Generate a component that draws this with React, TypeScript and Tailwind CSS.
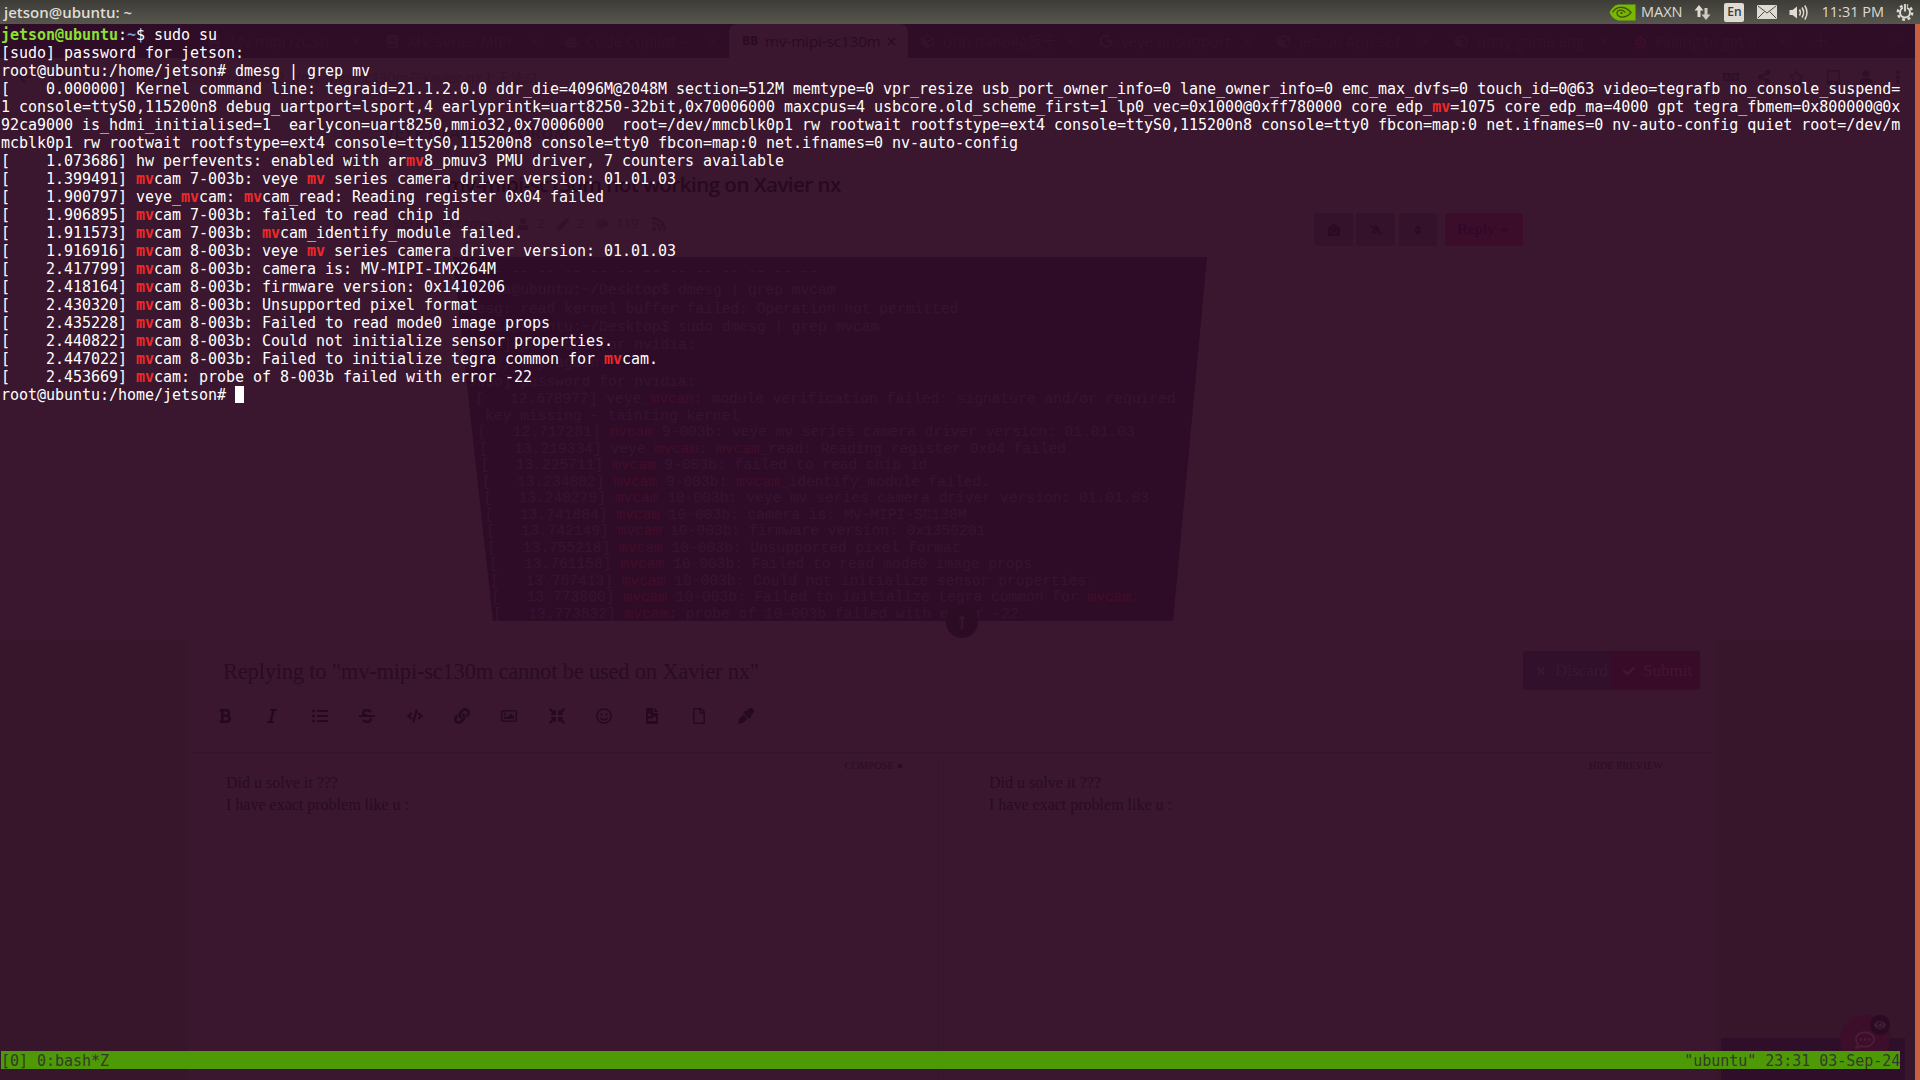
import { Fragment, type ReactNode } from "react";
import {
  FaBold,
  FaItalic,
  FaListUl,
  FaStrikethrough,
  FaCode,
  FaLink,
  FaRegImage,
  FaCompressArrowsAlt,
  FaRegSmile,
  FaFileImage,
  FaRegFile,
  FaEyeDropper,
  FaTimes,
  FaCheck,
  FaEnvelopeOpen,
  FaBellSlash,
  FaSort,
  FaCaretDown,
  FaEye,
  FaRegCommentDots,
  FaLongArrowAltUp,
  FaUser,
  FaPen,
  FaRss,
  FaRegStar,
  FaEllipsisV,
  FaShareAlt,
  FaArrowLeft,
  FaArrowRight,
  FaRedo,
  FaLanguage,
  FaTabletAlt,
  FaGoogle,
  FaRobot,
  FaBook,
  FaCube,
  FaRaspberryPi,
} from "react-icons/fa";
import { Plus, ChevronDown, X } from "lucide-react";

const LOG_LINES = [
  "[    1.073686] hw perfevents: enabled with ar|mv|8_pmuv3 PMU driver, 7 counters available",
  "[    1.399491] |mv|cam 7-003b: veye |mv| series camera driver version: 01.01.03",
  "[    1.900797] veye_|mv|cam: |mv|cam_read: Reading register 0x04 failed",
  "[    1.906895] |mv|cam 7-003b: failed to read chip id",
  "[    1.911573] |mv|cam 7-003b: |mv|cam_identify_module failed.",
  "[    1.916916] |mv|cam 8-003b: veye |mv| series camera driver version: 01.01.03",
  "[    2.417799] |mv|cam 8-003b: camera is: MV-MIPI-IMX264M",
  "[    2.418164] |mv|cam 8-003b: firmware version: 0x1410206",
  "[    2.430320] |mv|cam 8-003b: Unsupported pixel format",
  "[    2.435228] |mv|cam 8-003b: Failed to read mode0 image props",
  "[    2.440822] |mv|cam 8-003b: Could not initialize sensor properties.",
  "[    2.447022] |mv|cam 8-003b: Failed to initialize tegra common for |mv|cam.",
  "[    2.453669] |mv|cam: probe of 8-003b failed with error -22",
];

const KERNEL_LINES = [
  "[    0.000000] Kernel command line: tegraid=21.1.2.0.0 ddr_die=4096M@2048M section=512M memtype=0 vpr_resize usb_port_owner_info=0 lane_owner_info=0 emc_max_dvfs=0 touch_id=0@63 video=tegrafb no_console_suspend=",
  "1 console=ttyS0,115200n8 debug_uartport=lsport,4 earlyprintk=uart8250-32bit,0x70006000 maxcpus=4 usbcore.old_scheme_first=1 lp0_vec=0x1000@0xff780000 core_edp_|mv|=1075 core_edp_ma=4000 gpt tegra_fbmem=0x800000@0x",
  "92ca9000 is_hdmi_initialised=1  earlycon=uart8250,mmio32,0x70006000  root=/dev/mmcblk0p1 rw rootwait rootfstype=ext4 console=ttyS0,115200n8 console=tty0 fbcon=map:0 net.ifnames=0 nv-auto-config quiet root=/dev/m",
  "mcblk0p1 rw rootwait rootfstype=ext4 console=ttyS0,115200n8 console=tty0 fbcon=map:0 net.ifnames=0 nv-auto-config",
];

const GHOST_TOP = [
  "-- -- -- -- -- -- -- -- -- -- -- -- -- --",
  "nvidia@ubuntu:~/Desktop$ dmesg | grep mvcam",
  "dmesg: read kernel buffer failed: Operation not permitted",
  "nvidia@ubuntu:~/Desktop$ sudo dmesg | grep mvcam",
  "[sudo] password for nvidia:",
  "Sorry, try again.",
  "[sudo] password for nvidia:",
];

const GHOST_LOG = [
  "[   12.678977] veye_|mvcam|: module verification failed: signature and/or required",
  " key missing - tainting kernel",
  "[   12.717281] |mvcam| 9-003b: veye mv series camera driver version: 01.01.03",
  "[   13.219334] veye_|mvcam|: |mvcam|_read: Reading register 0x04 failed",
  "[   13.225711] |mvcam| 9-003b: failed to read chip id",
  "[   13.234802] |mvcam| 9-003b: |mvcam|_identify_module failed.",
  "[   13.240279] |mvcam| 10-003b: veye mv series camera driver version: 01.01.03",
  "[   13.741884] |mvcam| 10-003b: camera is: MV-MIPI-SC130M",
  "[   13.742149] |mvcam| 10-003b: firmware version: 0x1350201",
  "[   13.755218] |mvcam| 10-003b: Unsupported pixel format",
  "[   13.761158] |mvcam| 10-003b: Failed to read mode0 image props",
  "[   13.767413] |mvcam| 10-003b: Could not initialize sensor properties.",
  "[   13.773800] |mvcam| 10-003b: Failed to initialize tegra common for |mvcam|.",
  "[   13.773832] |mvcam|: probe of 10-003b failed with error -22",
];

const TABS_BEFORE: { title: string; icon?: ReactNode }[] = [
  { title: "Mv mipi i2c.sh", icon: <FaBook className="size-[13px]" /> },
  { title: "MV Series MIPI", icon: <FaBook className="size-[13px]" /> },
  { title: "Code Copilot -", icon: <FaRobot className="size-[15px]" /> },
];

const TABS_AFTER: { title: string; icon?: ReactNode }[] = [
  { title: "orin nano4g板卡", icon: <FaCube className="size-[13px]" /> },
  { title: "veye unsupport", icon: <FaGoogle className="size-[14px]" /> },
  { title: "Jetson App Sof", icon: <FaCube className="size-[13px]" /> },
  { title: "unity game eng", icon: <FaCube className="size-[13px]" /> },
  { title: "Failing to get a", icon: <FaRaspberryPi className="size-[15px] text-[#43102f]" /> },
];

const TOOLBAR = [
  FaBold,
  FaItalic,
  FaListUl,
  FaStrikethrough,
  FaCode,
  FaLink,
  FaRegImage,
  FaCompressArrowsAlt,
  FaRegSmile,
  FaFileImage,
  FaRegFile,
  FaEyeDropper,
];

// splits on | : every odd piece is a grep match
function Marked({ text, className }: { text: string; className: string }) {
  return (
    <>
      {text.split("|").map((part, i) =>
        i % 2 === 1 ? (
          <span key={i} className={className}>
            {part}
          </span>
        ) : (
          <Fragment key={i}>{part}</Fragment>
        ),
      )}
    </>
  );
}

function NvidiaLogo() {
  return (
    <svg width="27" height="17" viewBox="0 0 27 17">
      <path d="M9 0.5H26.5V16.5H9.5C5 15.5 2 12 0.5 8.5C2.5 4.5 5 1.5 9 0.5Z" fill="#76b900" />
      <path
        d="M3.5 8.5C6 4.5 10 3 13.5 3.5C17 4 20 6 22 8.5C19.5 11.5 16 13.5 12.5 13C9.5 12.7 8 10.5 8 8.5C8.5 6.8 10.5 5.8 12.5 6.2C14.5 6.6 15.5 7.6 16.5 8.6"
        fill="none"
        stroke="#46520f"
        strokeWidth="1.3"
      />
      <path d="M11 9C11.5 7.8 13 7.8 14 9C13 10.5 11.5 10.3 11 9Z" fill="#46520f" />
    </svg>
  );
}

function TransferIcon() {
  return (
    <svg width="17" height="17" viewBox="0 0 17 17" fill="#dfdbd2">
      <path d="M5 1L9.5 6.5H6.5V13H3.5V6.5H0.5Z" />
      <path d="M12 16L7.5 10.5H10.5V4H13.5V10.5H16.5Z" fill="#cfcbc2" />
    </svg>
  );
}

function MailIcon() {
  return (
    <svg width="20" height="14" viewBox="0 0 20 14">
      <rect x="0" y="0" width="20" height="14" rx="1" fill="#dfdbd2" />
      <path d="M1 1L10 8L19 1M1 13L7.5 6.5M19 13L12.5 6.5" fill="none" stroke="#4a4943" strokeWidth="1" />
    </svg>
  );
}

function VolumeIcon() {
  return (
    <svg width="20" height="17" viewBox="0 0 20 17" fill="none" stroke="#dfdbd2">
      <path d="M0.5 6H3.5L8 2.5V14.5L3.5 11H0.5Z" fill="#dfdbd2" stroke="none" />
      <path d="M10.5 5.5C11.7 7.5 11.7 9.5 10.5 11.5" strokeWidth="1.5" />
      <path d="M13 3.5C15 6.5 15 10.5 13 13.5" strokeWidth="1.5" />
      <path d="M15.8 1.5C18.6 6 18.6 11 15.8 15.5" strokeWidth="1.5" />
    </svg>
  );
}

function SessionIcon() {
  return (
    <svg width="18" height="18" viewBox="0 0 18 18" fill="none" stroke="#dfdbd2">
      <circle cx="9" cy="9.5" r="7.2" strokeWidth="2.4" strokeDasharray="2.83 2.83" />
      <circle cx="9" cy="9.5" r="5" strokeWidth="2" />
      <path d="M9 1V8" stroke="#55544c" strokeWidth="4" />
      <path d="M9 1V8.5" strokeWidth="1.8" />
    </svg>
  );
}

function TopPanel() {
  return (
    <header className="relative flex h-6 shrink-0 items-center justify-between bg-gradient-to-b from-[#3d3c37] to-[#57564e] pl-1 pr-[6px] font-['Open_Sans',sans-serif] text-[14.5px] text-[#dfdbd2]">
      <span className="text-[15px] font-semibold">jetson@ubuntu: ~</span>
      <div className="flex items-center">
        <NvidiaLogo />
        <span className="ml-[5px] text-[#dfdbd2]">MAXN</span>
        <span className="ml-[12px]">
          <TransferIcon />
        </span>
        <span className="ml-[13px] flex h-[19px] w-5 items-center justify-center rounded-[2px] bg-[#dfdbd2] text-[12px] font-semibold text-[#3c3b37]">
          En
        </span>
        <span className="ml-[13px]">
          <MailIcon />
        </span>
        <span className="ml-3">
          <VolumeIcon />
        </span>
        <span className="ml-3">11:31 PM</span>
        <span className="ml-3">
          <SessionIcon />
        </span>
      </div>
    </header>
  );
}

function GhostTab({ title, icon }: { title: string; icon?: ReactNode }) {
  return (
    <div className="flex w-[178px] shrink-0 items-center pl-[13px] pr-[10px]">
      <span className="flex w-[22px] shrink-0 items-center">{icon}</span>
      <span className="min-w-0 flex-1 overflow-hidden whitespace-nowrap">{title}</span>
      <X className="size-[13px] shrink-0" />
    </div>
  );
}

// the browser window that shows through the transparent terminal
function GhostBrowser() {
  return (
    <div className="absolute inset-0 flex flex-col font-['Open_Sans','Noto_Sans_CJK_SC',sans-serif] text-[#2a0b22]">
      <div className="flex h-[34px] shrink-0 items-center bg-[#2f0d26] pl-[195px] text-[15px] text-[#34122c]">
        {TABS_BEFORE.map((t) => (
          <GhostTab key={t.title} {...t} />
        ))}
        <div className="flex h-full w-[179px] shrink-0 items-center rounded-t-lg bg-[#3a172e] pl-[13px] pr-[10px] text-[#2a0b22]">
          <span className="w-[23px] shrink-0 text-[12px] font-bold">BB</span>
          <span className="min-w-0 flex-1 overflow-hidden whitespace-nowrap">mv-mipi-sc130m</span>
          <X className="size-[13px] shrink-0" />
        </div>
        {TABS_AFTER.map((t) => (
          <GhostTab key={t.title} {...t} />
        ))}
        <Plus className="ml-[13px] size-5" />
        <ChevronDown className="ml-[58px] size-5" />
      </div>

      <div className="flex h-[42px] shrink-0 items-center pb-1 pl-[18px] pr-[15px] text-[14px] text-[#2f1029]">
        <FaArrowLeft className="size-[14px]" />
        <FaArrowRight className="ml-5 size-[14px]" />
        <FaRedo className="ml-5 size-[13px]" />
        <span className="ml-[44px] whitespace-nowrap text-[#33122c]">
          forum.veye.cc/topic/2.../mv-mipi-sc130m在xavier-nx上无法/2
        </span>
        <div className="ml-auto flex items-center gap-[18px]">
          <FaLanguage className="size-[16px]" />
          <FaShareAlt className="size-[14px]" />
          <FaRegStar className="size-[15px]" />
          <FaTabletAlt className="ml-1 size-[15px]" />
          <FaUser className="size-[14px]" />
          <FaEllipsisV className="size-[14px]" />
        </div>
      </div>

      <div className="relative flex-1">
        <span className="absolute left-[384px] top-[20px] text-[17px] font-semibold text-[#30112a]">
          VEYE IMAGING FORUM
        </span>
        <h1 className="absolute left-[446px] top-[68px] whitespace-nowrap text-[20.5px] font-semibold leading-8 tracking-[-0.5px] text-[#28091f]">
          mv-mipi-sc130m not working on Xavier nx
        </h1>
        <div className="absolute left-[393px] top-[114px] flex items-center gap-2 text-[13px] text-[#30112a]">
          <span>VEYE MIPI camera</span>
          <FaUser className="ml-2 size-3" />
          <span>2</span>
          <FaPen className="ml-1 size-3" />
          <span>2</span>
          <FaEye className="ml-1 size-3" />
          <span>119</span>
          <FaRss className="ml-1 size-4" />
        </div>

        <div className="absolute left-[1314px] top-[113px] flex h-[33px] items-center">
          <span className="flex h-full w-[39px] items-center justify-center rounded-[3px] bg-[#34122b]">
            <FaEnvelopeOpen className="size-3" />
          </span>
          <span className="ml-[3px] flex h-full w-[39px] items-center justify-center rounded-[3px] bg-[#34122b]">
            <FaBellSlash className="size-3" />
          </span>
          <span className="ml-1 flex h-full w-[38px] items-center justify-center rounded-[3px] bg-[#34122b]">
            <FaSort className="size-3" />
          </span>
          <span className="ml-2 flex h-full w-[78px] items-center justify-between rounded-[3px] bg-[#3c0d2a] px-3 font-['Liberation_Serif',serif] text-[15px] font-bold text-[#30092a]">
            Reply
            <FaCaretDown className="size-3" />
          </span>
        </div>

        <div className="absolute left-[453px] top-[157px] h-[364px] w-[754px] bg-[#2e0c27] [clip-path:polygon(0_0,100%_0,95.5%_100%,5.3%_100%)]">
          <div className="flex flex-col pl-[6px] pt-[6px] text-[14.6px] leading-[18.3px] text-[#361431]">
            {GHOST_TOP.map((line, i) => (
              <pre key={i} className="font-['Liberation_Mono',monospace]">
                {line}
              </pre>
            ))}
          </div>
          <div className="flex flex-col text-[14.6px] leading-[16.5px] text-[#361431]">
            {GHOST_LOG.map((line, i) => (
              <pre
                key={i}
                className="font-['Liberation_Mono',monospace]"
                style={{ paddingLeft: 22 + i * 1.4 }}
              >
                <Marked text={line} className="text-[#430c29]" />
              </pre>
            ))}
          </div>
        </div>
        <span className="absolute left-[946px] top-[506px] flex size-8 items-center justify-center rounded-full bg-[#2c0c25]">
          <FaLongArrowAltUp className="size-4 text-[#361431]" />
        </span>

        <div className="absolute inset-x-0 bottom-0 top-[540px] bg-[#37152b]">
          <div className="ml-[188px] flex h-full w-[1528px] flex-col bg-[#3a172e] font-['Liberation_Serif',serif]">
            <div className="flex h-[58px] shrink-0 items-start justify-between pl-[35px] pr-[16px] pt-[11px]">
              <span className="mt-[6px] text-[22.5px] leading-[30px] tracking-[-0.2px] text-[#2b0b24]">
                Replying to "mv-mipi-sc130m cannot be used on Xavier nx"
              </span>
              <div className="flex h-[39px] text-[17px]">
                <span className="flex w-[88px] items-center gap-2 rounded-l-[3px] bg-[#30102a] pl-3 text-[#3a1833]">
                  <FaTimes className="size-3" />
                  Discard
                </span>
                <span className="flex w-[89px] items-center gap-2 rounded-r-[3px] bg-[#380c29] pl-3 text-[#481334]">
                  <FaCheck className="size-3" />
                  Submit
                </span>
              </div>
            </div>
            <div className="flex h-[36px] shrink-0 items-center gap-[31.4px] pl-[29px] text-[#250920]">
              {TOOLBAR.map((Icon, i) => (
                <Icon key={i} className="size-[16px]" />
              ))}
            </div>
            <div className="mx-[3px] mt-[18px] flex flex-1 border-t border-[#36152b] pt-[5px] text-[16px] leading-[22px] text-[#290b22]">
              <div className="w-[748px] border-r border-[#36152b] px-[35px]">
                <p className="text-right text-[10.5px] leading-4 text-[#2b0b24]">COMPOSE ●</p>
                <p className="-mt-[2px]">Did u solve it ???</p>
                <p>I have exact problem like u :</p>
              </div>
              <div className="flex-1 px-[50px]">
                <p className="text-right text-[10.5px] leading-4 text-[#2b0b24]">HIDE PREVIEW</p>
                <p className="-mt-[2px]">Did u solve it ???</p>
                <p>I have exact problem like u :</p>
              </div>
            </div>
          </div>
        </div>

        <div className="absolute bottom-0 left-[1721px] h-[42px] w-[184px] bg-[#2e0e28]" />
        <span className="absolute left-[1840px] top-[915px] flex size-[50px] items-center justify-center rounded-full bg-[#3c0e2a]">
          <FaRegCommentDots className="size-5 text-[#4e1b3a]" />
        </span>
        <span className="absolute left-[1870px] top-[915px] flex size-5 items-center justify-center rounded-full bg-[#2a0b22]">
          <FaEye className="size-3 text-[#42203a]" />
        </span>
      </div>
    </div>
  );
}

function Terminal() {
  const row = "h-[18px] whitespace-pre font-['DejaVu_Sans_Mono',monospace]";
  return (
    <div className="relative flex flex-1 flex-col justify-between pb-[11px] pl-px pr-[15px] pt-[2px] font-['DejaVu_Sans_Mono',monospace] text-[15px] leading-[18px] tracking-[-0.03px] text-white">
      <div>
        <pre className={row}>
          <span className="font-bold text-[#8ae234]">jetson@ubuntu</span>:
          <span className="font-bold text-[#729fcf]">~</span>$ sudo su
        </pre>
        <pre className={row}>[sudo] password for jetson:</pre>
        <pre className={row}>root@ubuntu:/home/jetson# dmesg | grep mv</pre>
        {KERNEL_LINES.map((line) => (
          <pre key={line} className={row}>
            <Marked text={line} className="font-bold text-[#ef2929]" />
          </pre>
        ))}
        {LOG_LINES.map((line) => (
          <pre key={line} className={row}>
            <Marked text={line} className="font-bold text-[#ef2929]" />
          </pre>
        ))}
        <pre className={row}>
          root@ubuntu:/home/jetson# <span className="inline-block h-[17px] w-[9px] bg-white align-top" />
        </pre>
      </div>
      <div className="flex h-[18px] items-center justify-between bg-[#4e9a06] pt-px text-[#333a2c]">
        <pre className="font-['DejaVu_Sans_Mono',monospace]">[0] 0:bash*Z</pre>
        <pre className="font-['DejaVu_Sans_Mono',monospace]">"ubuntu" 23:31 03-Sep-24</pre>
      </div>
    </div>
  );
}

export default function App() {
  return (
    <div className="flex h-[1080px] w-[1920px] flex-col overflow-hidden bg-[#3a172e]">
      <TopPanel />
      <div className="relative flex min-h-0 flex-1">
        <GhostBrowser />
        <Terminal />
        <div className="relative w-[5px] shrink-0 bg-[#c8603f]" />
      </div>
    </div>
  );
}
